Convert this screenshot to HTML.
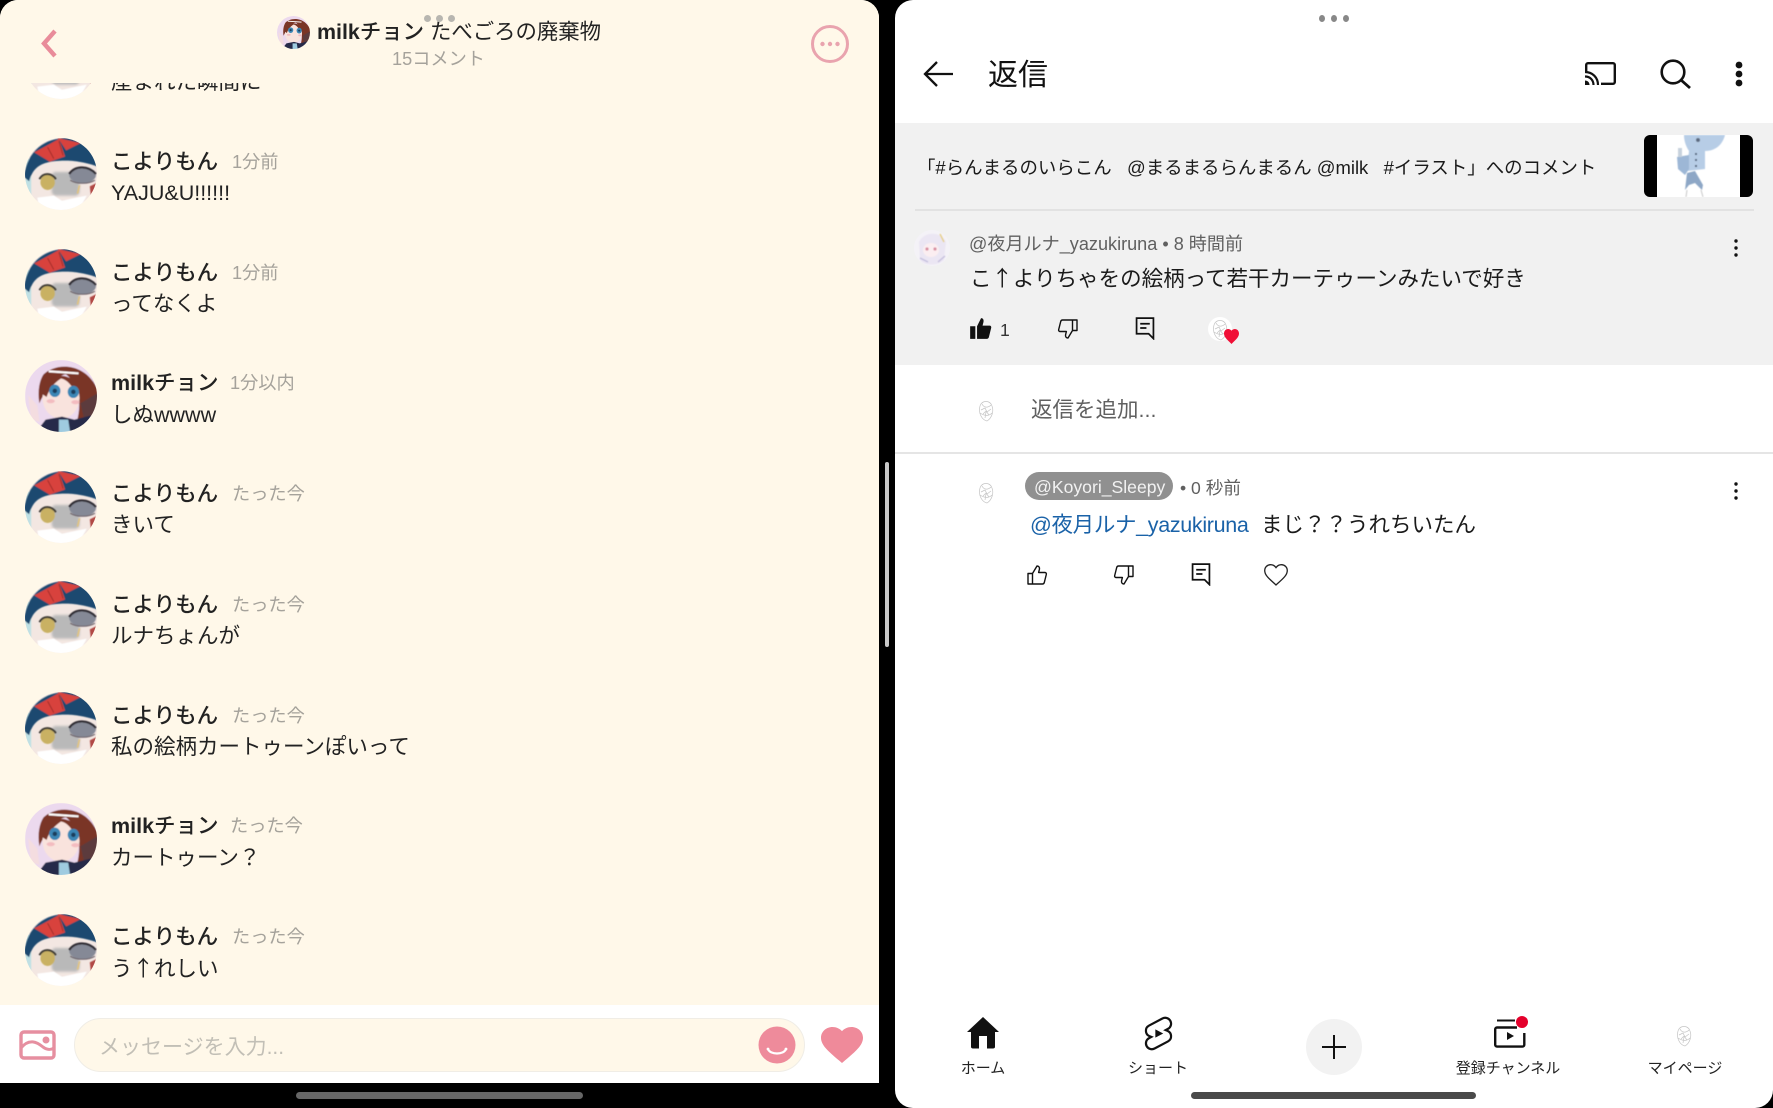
<!DOCTYPE html>
<html lang="ja"><head><meta charset="utf-8"><title>split</title>
<style>
html,body{margin:0;padding:0;background:#000;}
body{position:relative;width:1773px;height:1108px;overflow:hidden;font-family:"Liberation Sans","Noto Sans CJK JP",sans-serif;color:#1a1a1a;}
.p{position:absolute;}
.t{position:absolute;white-space:nowrap;line-height:30px;height:30px;}
.n{font-size:21.5px;font-weight:500;color:#222;left:111px;margin-top:1px;}
.n b{font-weight:700;}
.m{font-size:21.5px;color:#222;left:111px;}
.d{font-size:18.2px;color:#a5a29b;margin-top:1px;}
.a{position:absolute;left:25px;width:72px;height:72px;}
.nav{font-size:15px;color:#222;transform:translateX(-50%);margin-top:1px;}
.j{font-family:"Noto Sans CJK JP",sans-serif;}
svg{display:block;overflow:visible;}
</style></head><body>
<svg width="0" height="0" style="position:absolute">
<defs>
<clipPath id="cc"><circle cx="35" cy="35" r="35"/></clipPath>
<filter id="bl"><feGaussianBlur stdDeviation="0.6"/></filter>
<filter id="bl2"><feGaussianBlur stdDeviation="1.3"/></filter>
<symbol id="koyori" viewBox="0 0 70 70"><g clip-path="url(#cc)">
<rect width="70" height="70" fill="#f3e7e2"/>
<g filter="url(#bl)">
<path d="M0 20H6V62H0Z" fill="#bfe0e4"/>
<path d="M-1 38C2 12 20 0 40 0C56 0 68 10 71 28C64 25 50 22 40 22C30 22 20 23 14 27C9 30 6 35 4 42Z" fill="#1c4a70"/>
<path d="M9 14L33 1L39 18L24 23Z" fill="#d8433c"/>
<path d="M32 0L54 5L40 12Z" fill="#d8433c"/>
<path d="M22 9L28 20M33 3L37 17" stroke="#a22f2c" stroke-width="1" fill="none"/>
</g>
<rect x="26" y="33" width="27" height="23" rx="4" fill="#b9b9b9" filter="url(#bl2)"/>
<g filter="url(#bl)">
<ellipse cx="56" cy="36" rx="13" ry="8" fill="#858996"/>
<path d="M43 35C49 26 62 27 69 35" stroke="#2e2c30" stroke-width="2" fill="none"/>
<path d="M44 41C50 45 62 45 68 41" stroke="#6a5f66" stroke-width="1" fill="none"/>
<ellipse cx="22" cy="43" rx="7" ry="7.5" fill="#c9b163"/>
<path d="M14 40C18 33 26 34 30 40" stroke="#3e3a36" stroke-width="2" fill="none"/>
<path d="M63 47L71 43V58L64 56Z" fill="#b14a44"/>
<path d="M12 58L28 56L36 61L50 58L60 56L52 71H14Z" fill="#fff"/>
<path d="M53 46L51 54" stroke="#e3c37b" stroke-width="1.5"/>
</g></g></symbol>
<symbol id="milk" viewBox="0 0 70 70"><g clip-path="url(#cc)"><g filter="url(#bl)">
<rect width="70" height="70" fill="#ecd9ee"/>
<path d="M18 14C30 2 60 2 71 30V60L50 62C56 40 52 24 40 14C32 14 20 28 14 42C12 30 14 20 18 14Z" fill="#7a3527"/>
<ellipse cx="35" cy="37" rx="18" ry="20" fill="#f9e3dd"/>
<path d="M15 32C20 14 40 8 55 27L50 34C45 23 40 19 35 18C29 22 24 27 21 36Z" fill="#7a3527"/>
<ellipse cx="29" cy="30" rx="5.5" ry="6" fill="#3a86b5"/><ellipse cx="47" cy="31" rx="5.5" ry="6" fill="#3a86b5"/>
<circle cx="29" cy="30" r="2.2" fill="#1d3e5c"/><circle cx="47" cy="31" r="2.2" fill="#1d3e5c"/>
<ellipse cx="25" cy="40" rx="4" ry="2" fill="#f3bcc0"/><ellipse cx="49" cy="41" rx="4" ry="2" fill="#f3bcc0"/>
<path d="M23 11L52 13" stroke="#fff" stroke-width="2"/>
<path d="M54 42L71 32V58L58 60Z" fill="#5c3b3c"/>
<path d="M3 34L12 44L14 60L6 58Z" fill="#f4dde0"/>
<path d="M10 71L20 58L36 55L48 58L64 54L70 71Z" fill="#262b48"/>
<path d="M33 58L42 58L44 71L33 71Z" fill="#9fcbe0"/>
</g></g></symbol>
<symbol id="doodle" viewBox="0 0 24 24"><circle cx="12" cy="12" r="12" fill="#fff"/>
<g fill="none" stroke="#c4c4c4" stroke-width=".7"><path d="M6 8C8 2 16 2 18 8C20 13 18 20 13 23C8 22 4 15 6 8Z"/><path d="M8 6C10 10 14 10 17 7M7 12L11 10L13 14L17 11M9 16L12 13L15 17M11 20L12 14M6 15C9 17 14 19 18 15"/></g></symbol>
<symbol id="like" viewBox="0 0 24 24"><path d="M7.5 10.5V21H3V10.5ZM7.5 10.5L12 3C14 3 14.8 4.5 14.4 6.3L13.6 9.5H20C21 9.5 21.6 10.5 21.3 11.5L19.3 19.5C19 20.5 18.4 21 17.5 21H7.5" fill="none" stroke="#111" stroke-width="1.4" stroke-linejoin="round"/></symbol>
<symbol id="comment" viewBox="0 0 20 24"><path d="M1.2 1.2H18.8V22.5L13.8 17.5H1.2Z" fill="none" stroke="#111" stroke-width="1.8"/><path d="M5 7H15M5 11.5H11.5" stroke="#111" stroke-width="1.8"/></symbol>
<symbol id="kebab" viewBox="0 0 4 18"><circle cx="2" cy="2" r="1.7" fill="#111"/><circle cx="2" cy="9" r="1.7" fill="#111"/><circle cx="2" cy="16" r="1.7" fill="#111"/></symbol>
<symbol id="luna" viewBox="0 0 36 36"><circle cx="18" cy="18" r="18" fill="#f4f2f7"/><g filter="url(#bl)"><path d="M5 12C10 1 27 1 32 12L30 30C24 36 10 36 6 30Z" fill="#ebe6f3"/><ellipse cx="17" cy="20" rx="8" ry="7" fill="#fbeef1"/><circle cx="13" cy="19" r="1.6" fill="#d98fa2"/><circle cx="21" cy="19" r="1.6" fill="#d98fa2"/><path d="M26 4L30 12" stroke="#e6d085" stroke-width="1.4"/><path d="M6 28L14 32M24 32L31 26" stroke="#c4bedd" stroke-width="1.4"/></g></symbol>
</defs></svg>

<!-- LEFT PANEL -->
<div class="p" style="left:0;top:0;width:879px;height:1083px;background:#fff;border-radius:18px 18px 0 0;overflow:hidden;">
 <div class="p" style="left:0;top:0;width:879px;height:1005px;background:#fff8e9;"></div>
 <svg class="a" style="top:27px"><use href="#koyori" width="72" height="72"/></svg>
 <div class="t m" style="top:67px">産まれた瞬間に</div>

 <svg class="a" style="top:138px"><use href="#koyori" width="72" height="72"/></svg>
 <div class="t n" style="top:146px">こよりもん</div><div class="t d" style="left:232px;top:146px">1分前</div>
 <div class="t m" style="top:178px">YAJU&amp;U!!!!!!</div>

 <svg class="a" style="top:249px"><use href="#koyori" width="72" height="72"/></svg>
 <div class="t n" style="top:257px">こよりもん</div><div class="t d" style="left:232px;top:257px">1分前</div>
 <div class="t m" style="top:289px">ってなくよ</div>

 <svg class="a" style="top:360px"><use href="#milk" width="72" height="72"/></svg>
 <div class="t n" style="top:367px"><b>milk</b>チョン</div><div class="t d" style="left:230px;top:367px">1分以内</div>
 <div class="t m" style="top:400px">しぬwwww</div>

 <svg class="a" style="top:471px"><use href="#koyori" width="72" height="72"/></svg>
 <div class="t n" style="top:478px">こよりもん</div><div class="t d" style="left:232px;top:478px">たった今</div>
 <div class="t m" style="top:510px">きいて</div>

 <svg class="a" style="top:581px"><use href="#koyori" width="72" height="72"/></svg>
 <div class="t n" style="top:589px">こよりもん</div><div class="t d" style="left:232px;top:589px">たった今</div>
 <div class="t m" style="top:621px">ルナちょんが</div>

 <svg class="a" style="top:692px"><use href="#koyori" width="72" height="72"/></svg>
 <div class="t n" style="top:700px">こよりもん</div><div class="t d" style="left:232px;top:700px">たった今</div>
 <div class="t m" style="top:732px">私の絵柄カートゥーンぽいって</div>

 <svg class="a" style="top:803px"><use href="#milk" width="72" height="72"/></svg>
 <div class="t n" style="top:810px"><b>milk</b>チョン</div><div class="t d" style="left:230px;top:810px">たった今</div>
 <div class="t m" style="top:843px">カートゥーン？</div>

 <svg class="a" style="top:914px"><use href="#koyori" width="72" height="72"/></svg>
 <div class="t n" style="top:921px">こよりもん</div><div class="t d" style="left:232px;top:921px">たった今</div>
 <div class="t m" style="top:953px">う<span class="j">↑</span>れしい</div>

 <!-- header -->
 <div class="p" style="left:0;top:0;width:879px;height:83px;background:#fff8e9;"></div>
 <svg class="p" style="left:277px;top:16px" width="33" height="33"><use href="#milk" width="33" height="33"/></svg>
 <div class="t" style="left:317px;top:17px;font-size:21.4px;color:#222"><span style="font-weight:700">milk</span><span style="font-weight:500">チョン</span> たべごろの廃棄物</div>
 <div class="t" style="left:392px;top:44px;font-size:18.2px;color:#a5a29b">15コメント</div>
 <svg class="p" style="left:40px;top:29px" width="18" height="29" viewBox="0 0 18 29"><path d="M15 2L4 14.5L15 27" fill="none" stroke="#e98c9a" stroke-width="4.4"/></svg>
 <svg class="p" style="left:810px;top:24px" width="40" height="40" viewBox="0 0 40 40"><circle cx="20" cy="20" r="17.5" fill="none" stroke="#e9a3ae" stroke-width="3"/><circle cx="12.5" cy="20" r="2.2" fill="#e9a3ae"/><circle cx="20" cy="20" r="2.2" fill="#e9a3ae"/><circle cx="27.5" cy="20" r="2.2" fill="#e9a3ae"/></svg>

 <!-- input bar -->
 <div class="p" style="left:74px;top:1018px;width:729px;height:52px;background:#fff8e9;border:1px solid #f0ede6;border-radius:27px;"></div>
 <div class="t" style="left:99px;top:1033px;font-size:21px;color:#c2bfb6">メッセージを入力...</div>
 <svg class="p" style="left:19px;top:1030px" width="37" height="30" viewBox="0 0 37 30"><rect x="2" y="2" width="33" height="26" rx="3" fill="none" stroke="#e68fa0" stroke-width="3.4"/><path d="M2 18C10 8 18 12 24 17C28 20 32 20 35 18" fill="none" stroke="#e68fa0" stroke-width="3"/><circle cx="27" cy="10" r="3.5" fill="#e68fa0"/></svg>
 <svg class="p" style="left:758px;top:1026px" width="38" height="38" viewBox="0 0 38 38"><circle cx="19" cy="19" r="18.5" fill="#ee8b9b"/><path d="M10 23C12 29 26 29 28 23" fill="none" stroke="#fff" stroke-width="2.2"/><circle cx="10" cy="23" r="1.4" fill="#fff"/><circle cx="28" cy="23" r="1.4" fill="#fff"/></svg>
 <svg class="p" style="left:821px;top:1027px" width="42" height="36" viewBox="2 3 20 18.35" preserveAspectRatio="none"><path d="M12 21.35l-1.45-1.32C5.4 15.36 2 12.28 2 8.5 2 5.42 4.42 3 7.5 3c1.74 0 3.41.81 4.5 2.09C13.09 3.81 14.76 3 16.5 3 19.58 3 22 5.42 22 8.5c0 3.78-3.4 6.86-8.55 11.54L12 21.35z" fill="#ef8a9a"/></svg>
</div>
<div class="p" style="left:424px;top:15px;width:7px;height:7px;border-radius:50%;background:#b8b6b0"></div>
<div class="p" style="left:436px;top:15px;width:7px;height:7px;border-radius:50%;background:#b8b6b0"></div>
<div class="p" style="left:448px;top:15px;width:7px;height:7px;border-radius:50%;background:#b8b6b0"></div>
<div class="p" style="left:296px;top:1092px;width:287px;height:7px;border-radius:4px;background:#666"></div>

<!-- divider handle -->
<div class="p" style="left:885px;top:462px;width:4px;height:185px;border-radius:2px;background:#c9c9c9"></div>

<!-- RIGHT PANEL -->
<div class="p" style="left:895px;top:0;width:878px;height:1108px;background:#fff;border-radius:18px 0 18px 18px;overflow:hidden;">
 <div class="p" style="left:0;top:123px;width:878px;height:242px;background:#f1f1f1;"></div>
</div>
<div class="p" style="left:1319px;top:15px;width:6px;height:7px;border-radius:50%;background:#888"></div>
<div class="p" style="left:1331px;top:15px;width:6px;height:7px;border-radius:50%;background:#888"></div>
<div class="p" style="left:1343px;top:15px;width:6px;height:7px;border-radius:50%;background:#888"></div>

<svg class="p" style="left:923px;top:60px" width="30" height="28" viewBox="0 0 30 28"><path d="M30 14H2M14 2L2 14L14 26" fill="none" stroke="#111" stroke-width="2.3"/></svg>
<div class="t" style="left:988px;top:58px;height:36px;line-height:36px;font-size:30px;color:#111">返信</div>
<svg class="p" style="left:1585px;top:62px" width="31" height="23" viewBox="0 0 31 23"><path d="M1.2 9V3C1.2 2 2 1.2 3 1.2H28C29 1.2 29.8 2 29.8 3V20C29.8 21 29 21.8 28 21.8H16" fill="none" stroke="#111" stroke-width="2.4"/><path d="M0 23V18.5C2.6 18.5 4.5 20.4 4.5 23Z" fill="#111"/><path d="M0 14.5C5 14.5 8.5 18 8.5 23M0 10C7.5 10 13 15.5 13 23" fill="none" stroke="#111" stroke-width="2.2"/></svg>
<svg class="p" style="left:1660px;top:59px" width="31" height="30" viewBox="0 0 31 30"><circle cx="13" cy="13" r="11.3" fill="none" stroke="#111" stroke-width="2.6"/><path d="M21 21L30 29" stroke="#111" stroke-width="2.8"/></svg>
<svg class="p" style="left:1735px;top:61px" width="8" height="26" viewBox="0 0 8 26"><circle cx="4" cy="4" r="3.4" fill="#111"/><circle cx="4" cy="13" r="3.4" fill="#111"/><circle cx="4" cy="22" r="3.4" fill="#111"/></svg>

<div class="t" style="left:917px;top:153px;font-size:18.45px;color:#1a1a1a">「#らんまるのいらこん&nbsp;&nbsp;&nbsp;@まるまるらんまるん @milk&nbsp;&nbsp;&nbsp;#イラスト」へのコメント</div>
<div class="p" style="left:1644px;top:135px;width:109px;height:62px;border-radius:6px;background:#000;overflow:hidden;">
 <div class="p" style="left:13px;top:0;width:83px;height:62px;background:#fff;"></div>
 <svg class="p" style="left:13px;top:0" width="83" height="62" viewBox="0 0 83 62"><g filter="url(#bl)"><path d="M27 0H68C66 8 60 16 48 16L48 34L30 36L32 16C28 10 27 4 27 0Z" fill="#b7cde6"/><path d="M20 22L32 20L32 34L28 40L21 34Z" fill="#9db7d6"/><path d="M21 13H25L25 22H21Z" fill="#c7d2dd"/><path d="M30 38L38 36L46 50L45 55L38 48L32 50L28 55Z" fill="#8ea7c6"/><circle cx="41" cy="5" r="2" fill="#5d6a80"/><path d="M39 18V34" stroke="#4d5f78" stroke-width="2" stroke-dasharray="2 4"/><path d="M30 55L29 62M44 55L46 62" stroke="#c8c8c8" stroke-width="1"/></g></svg>
</div>
<div class="p" style="left:915px;top:209px;width:839px;height:2px;background:#e2e2e2"></div>

<svg class="p" style="left:914px;top:230px" width="36" height="36"><use href="#luna" width="36" height="36"/></svg>
<div class="t" style="left:969px;top:229px;font-size:18.1px;color:#606060">@夜月ルナ_yazukiruna • 8 時間前</div>
<div class="t" style="left:970px;top:263px;font-size:21.5px;color:#1a1a1a">こ<span class="j">↑</span>よりちゃをの絵柄って若干カーテゥーンみたいで好き</div>
<svg class="p" style="left:1734px;top:239px" width="4" height="18"><use href="#kebab" width="4" height="18"/></svg>

<svg class="p" style="left:969px;top:317px" width="23" height="23" viewBox="2 2 20 20"><path d="M3 10H7.5V21H3ZM9 21V10L12.5 3C14.2 3 15 4.5 14.6 6.3L13.8 9.5H20C21 9.5 21.6 10.5 21.3 11.5L19.3 19.5C19 20.5 18.4 21 17.5 21Z" fill="#111"/></svg>
<div class="t" style="left:1000px;top:315px;font-size:17.6px;color:#333">1</div>
<svg class="p" style="left:1056px;top:317px;transform:rotate(180deg)" width="24" height="24"><use href="#like" width="24" height="24"/></svg>
<svg class="p" style="left:1135px;top:317px" width="20" height="23"><use href="#comment" width="20" height="23"/></svg>
<svg class="p" style="left:1208px;top:317px" width="24" height="24"><use href="#doodle" width="24" height="24"/></svg>
<svg class="p" style="left:1224px;top:329px" width="15" height="15" viewBox="2 3 20 18.35" preserveAspectRatio="none"><path d="M12 21.35l-1.45-1.32C5.4 15.36 2 12.28 2 8.5 2 5.42 4.42 3 7.5 3c1.74 0 3.41.81 4.5 2.09C13.09 3.81 14.76 3 16.5 3 19.58 3 22 5.42 22 8.5c0 3.78-3.4 6.86-8.55 11.54L12 21.35z" fill="#f00f36"/></svg>

<svg class="p" style="left:974px;top:398px" width="24" height="24"><use href="#doodle" width="24" height="24"/></svg>
<div class="t" style="left:1031px;top:395px;font-size:21.5px;color:#606060">返信を追加...</div>
<div class="p" style="left:895px;top:452px;width:878px;height:2px;background:#e5e5e5"></div>

<svg class="p" style="left:974px;top:480px" width="24" height="24"><use href="#doodle" width="24" height="24"/></svg>
<div class="p" style="left:1025px;top:472px;width:148px;height:28px;border-radius:14px;background:#909090"></div>
<div class="t" style="left:1034px;top:472px;font-size:17.6px;color:#f2f2f2">@Koyori_Sleepy</div>
<div class="t" style="left:1180px;top:473px;font-size:17.6px;color:#606060">• 0 秒前</div>
<svg class="p" style="left:1734px;top:482px" width="4" height="18"><use href="#kebab" width="4" height="18"/></svg>
<div class="t" style="left:1030px;top:510px;font-size:21.5px;letter-spacing:-.33px;color:#1a62a8">@夜月ルナ_yazukiruna</div>
<div class="t" style="left:1261px;top:510px;font-size:21.5px;color:#1a1a1a">まじ？？うれちいたん</div>

<svg class="p" style="left:1025px;top:563px" width="24" height="24"><use href="#like" width="24" height="24"/></svg>
<svg class="p" style="left:1112px;top:563px;transform:rotate(180deg)" width="24" height="24"><use href="#like" width="24" height="24"/></svg>
<svg class="p" style="left:1191px;top:563px" width="20" height="23"><use href="#comment" width="20" height="23"/></svg>
<svg class="p" style="left:1264px;top:564px" width="24" height="22" viewBox="2 3 20 18.35" preserveAspectRatio="none"><path d="M12 20.5l-1.2-1.1C5.6 14.8 2.6 12 2.6 8.5 2.6 5.7 4.8 3.6 7.5 3.6c1.7 0 3.4.9 4.5 2.4 1.1-1.5 2.8-2.4 4.5-2.4 2.7 0 4.9 2.1 4.9 4.9 0 3.5-3 6.3-8.2 10.9z" fill="none" stroke="#222" stroke-width="1.1"/></svg>

<!-- bottom nav -->
<svg class="p" style="left:966px;top:1016px" width="34" height="33" viewBox="0 0 34 33"><path d="M17 1L1 16H5V31C5 32 6 32.5 7 32.5H13V20H21V32.5H27C28 32.5 29 32 29 31V16H33Z" fill="#111"/></svg>
<div class="t nav" style="left:983px;top:1053px">ホーム</div>
<svg class="p" style="left:1144px;top:1017px" width="29" height="33" viewBox="3.5 1.5 17 21"><path d="M17.77 10.32c-.77-.32-1.2-.5-1.2-.5L18 9.06c1.84-.96 2.53-3.23 1.56-5.06s-3.24-2.53-5.07-1.56L6 6.94c-1.29.68-2.07 2.04-2 3.49.07 1.42.93 2.67 2.22 3.25.03.01 1.2.5 1.2.5L6 14.93c-1.83.97-2.53 3.24-1.56 5.07.97 1.83 3.24 2.53 5.07 1.56l8.5-4.5c1.29-.68 2.06-2.04 1.99-3.49-.07-1.42-.94-2.68-2.23-3.25z" fill="none" stroke="#111" stroke-width="1.4"/><path d="M10 14.65v-5.3L15 12z" fill="#111"/></svg>
<div class="t nav" style="left:1158px;top:1053px">ショート</div>
<div class="p" style="left:1306px;top:1019px;width:56px;height:56px;border-radius:50%;background:#f2f2f2"></div>
<svg class="p" style="left:1322px;top:1035px" width="24" height="24" viewBox="0 0 24 24"><path d="M12 0V24M0 12H24" stroke="#111" stroke-width="2"/></svg>
<svg class="p" style="left:1494px;top:1019px" width="32" height="29" viewBox="0 0 32 29"><path d="M3 1.5H21" stroke="#111" stroke-width="2"/><path d="M23 8.5H3C2 8.5 1.2 9.3 1.2 10.3V25.8C1.2 26.8 2 27.6 3 27.6H28.5C29.5 27.6 30.3 26.8 30.3 25.8V14" fill="none" stroke="#111" stroke-width="2.4"/><path d="M13 13V21L20 17Z" fill="#111"/></svg>
<div class="p" style="left:1516px;top:1016px;width:12px;height:12px;border-radius:50%;background:#e4002b"></div>
<div class="t nav" style="left:1508px;top:1053px">登録チャンネル</div>
<svg class="p" style="left:1672px;top:1023px" width="24" height="24"><use href="#doodle" width="24" height="24"/></svg>
<div class="t nav" style="left:1685px;top:1053px">マイページ</div>
<div class="p" style="left:1191px;top:1092px;width:285px;height:7px;border-radius:4px;background:#4a4a4a"></div>
</body></html>
